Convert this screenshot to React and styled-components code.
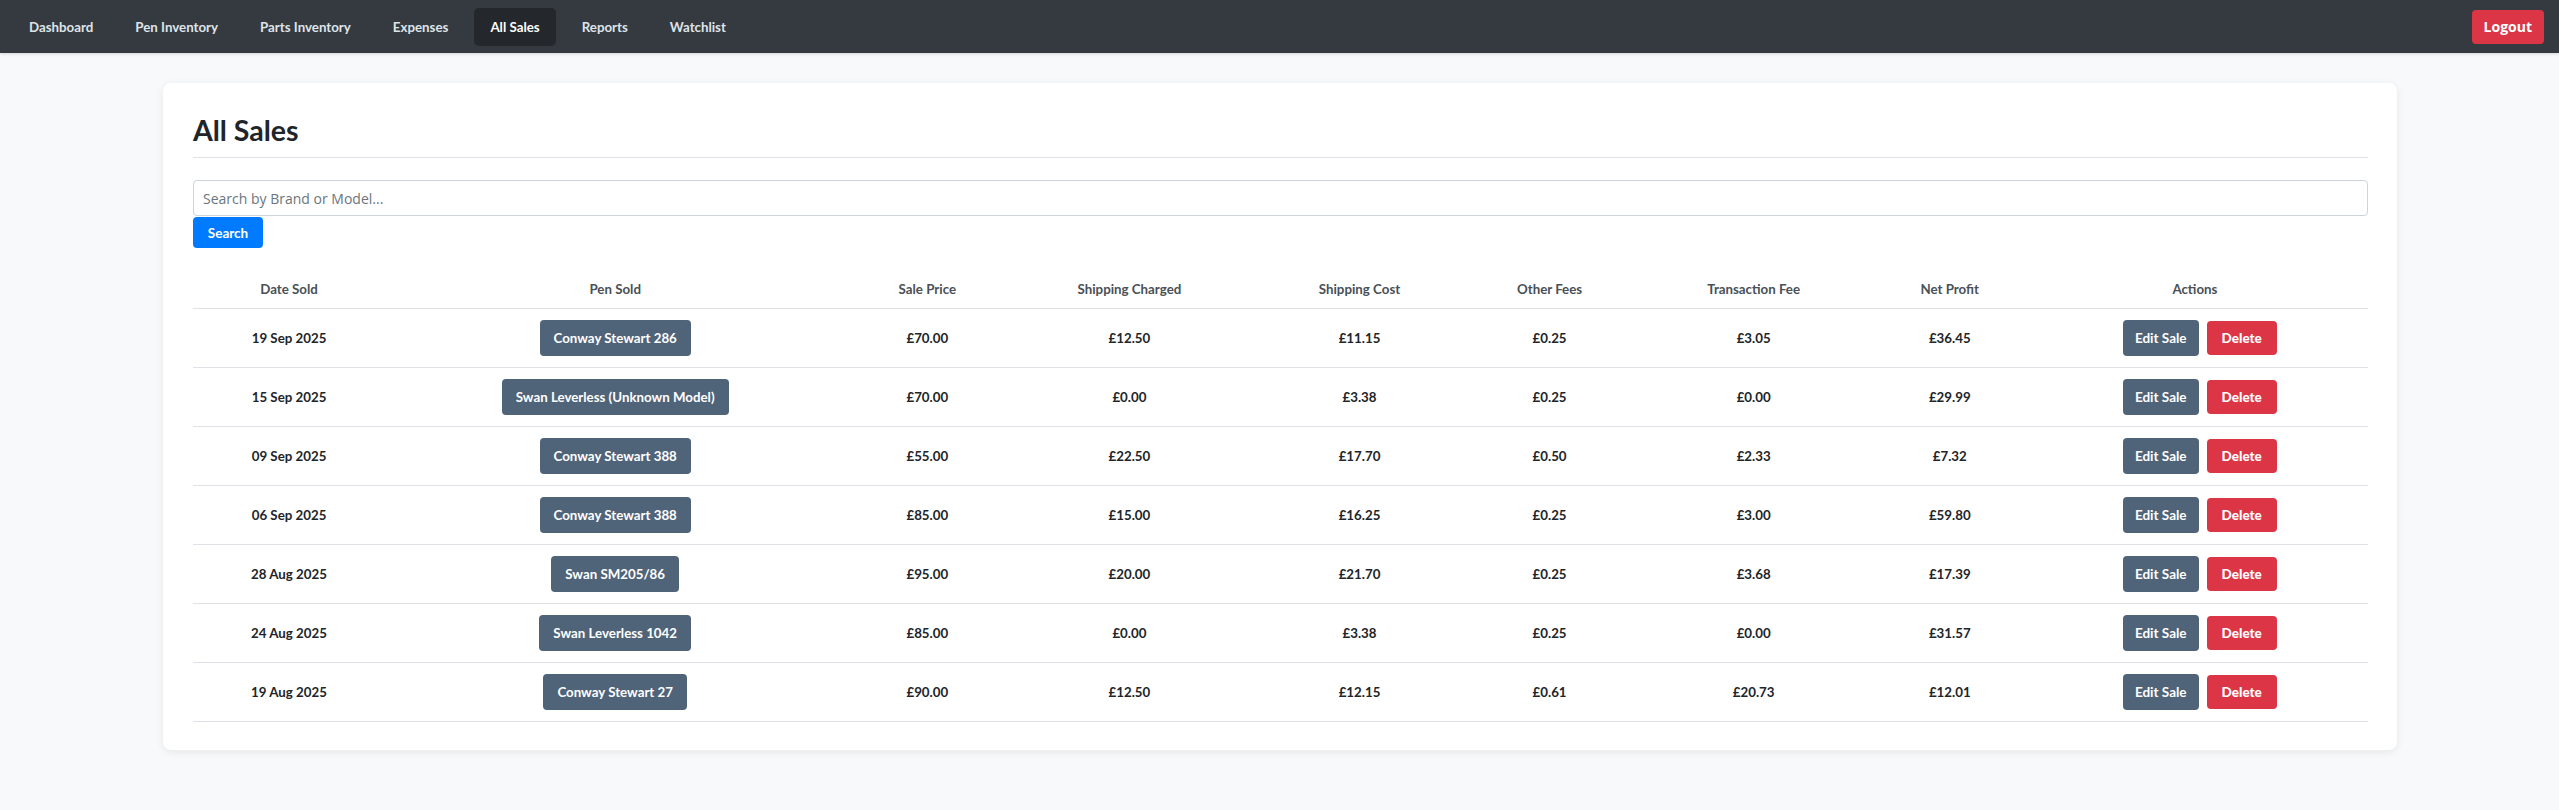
import React from 'react';
import styled, { createGlobalStyle } from 'styled-components';

const GlobalStyle = createGlobalStyle`
  body {
    margin: 0;
    background: #f8f9fa;
    font-family: Lato, "Liberation Sans", sans-serif;
    color: #212529;
  }
`;

const NavBar = styled.nav`
  height: 53px;
  background: #343a40;
  display: flex;
  align-items: center;
  justify-content: space-between;
  padding: 0 15px 0 13px;
  box-sizing: border-box;
  box-shadow: 0 1px 3px rgba(0, 0, 0, 0.15);
`;

const NavLinks = styled.div`
  display: flex;
  gap: 10px;
`;

const NavLink = styled.a`
  display: block;
  padding: 10px 16px;
  border-radius: 5px;
  font-size: 13.3px;
  font-weight: 700;
  line-height: 18px;
  color: ${(p) => (p.$active ? '#ffffff' : '#dfe4ea')};
  background: ${(p) => (p.$active ? '#24272b' : 'transparent')};
  text-decoration: none;
  cursor: pointer;
`;

const LogoutButton = styled.button`
  background: #dc3545;
  color: #fff;
  border: none;
  border-radius: 4px;
  height: 34px;
  padding: 0 12px;
  font-family: "Open Sans", "Noto Sans", sans-serif;
  font-weight: 700;
  font-size: 14px;
  cursor: pointer;
`;

const Card = styled.section`
  margin: 30px 162px 40px 163px;
  background: #fff;
  border-radius: 8px;
  box-shadow: 0 2px 8px rgba(0, 0, 0, 0.08);
  padding: 30px 29px 28px 30px;
`;

const Heading = styled.h2`
  margin: 0;
  padding-bottom: 10px;
  border-bottom: 1px solid #dee2e6;
  font-size: 28.5px;
  font-weight: 700;
  line-height: 34px;
  color: #212529;
`;

const SearchForm = styled.form`
  margin-top: 22px;
  display: flex;
  flex-direction: column;
  align-items: flex-start;
`;

const SearchInput = styled.input`
  width: 100%;
  box-sizing: border-box;
  height: 36px;
  padding: 0 9px;
  border: 1px solid #ced4da;
  border-radius: 4px;
  font-family: "Open Sans", "Noto Sans", sans-serif;
  font-size: 14px;
  color: #495057;
  &::placeholder {
    color: #6c757d;
  }
`;

const SearchButton = styled.button`
  width: 70px;
  height: 31px;
  margin-top: 1px;
  background: #007bff;
  color: #fff;
  border: none;
  border-radius: 4px;
  font-family: Lato, sans-serif;
  font-weight: 700;
  font-size: 13.5px;
  cursor: pointer;
`;

const Table = styled.table`
  margin-top: 18px;
  width: 100%;
  border-collapse: collapse;
  table-layout: fixed;
`;

const HeadCell = styled.th`
  padding: 15px 8px 10px;
  font-size: 13.3px;
  font-weight: 700;
  color: #495057;
  text-align: center;
  line-height: 17px;
  border-bottom: 1px solid #dee2e6;
`;

const Row = styled.tr`
  border-bottom: 1px solid #dee2e6;
`;

const Cell = styled.td`
  padding: 11px 8px;
  height: 36px;
  text-align: center;
  vertical-align: middle;
  font-size: 13.3px;
  font-weight: 700;
  color: #212529;
`;

const PenBadge = styled.span`
  display: inline-block;
  background: #4f6479;
  color: #fff;
  border-radius: 4px;
  padding: 9px 14px;
  font-size: 13.3px;
  font-weight: 700;
  line-height: 18px;
`;

const Actions = styled.div`
  display: flex;
  justify-content: center;
  align-items: center;
  gap: 8px;
  padding-left: 10px;
`;

const ActionButton = styled.button`
  border: none;
  border-radius: 4px;
  color: #fff;
  background: ${(p) => (p.$danger ? '#dc3545' : '#4f6479')};
  height: ${(p) => (p.$danger ? '34px' : '36px')};
  padding: 0 ${(p) => (p.$danger ? '15px' : '12px')};
  font-family: Lato, sans-serif;
  font-weight: ${(p) => (p.$danger ? 900 : 700)};
  font-size: 13.5px;
  cursor: pointer;
`;

const links = ['Dashboard', 'Pen Inventory', 'Parts Inventory', 'Expenses', 'All Sales', 'Reports', 'Watchlist'];

const columns = [
  ['Date Sold', 192],
  ['Pen Sold', 460],
  ['Sale Price', 164],
  ['Shipping Charged', 240],
  ['Shipping Cost', 220],
  ['Other Fees', 160],
  ['Transaction Fee', 248],
  ['Net Profit', 144],
  ['Actions', 346],
];

const sales = [
  ['19 Sep 2025', 'Conway Stewart 286', '£70.00', '£12.50', '£11.15', '£0.25', '£3.05', '£36.45'],
  ['15 Sep 2025', 'Swan Leverless (Unknown Model)', '£70.00', '£0.00', '£3.38', '£0.25', '£0.00', '£29.99'],
  ['09 Sep 2025', 'Conway Stewart 388', '£55.00', '£22.50', '£17.70', '£0.50', '£2.33', '£7.32'],
  ['06 Sep 2025', 'Conway Stewart 388', '£85.00', '£15.00', '£16.25', '£0.25', '£3.00', '£59.80'],
  ['28 Aug 2025', 'Swan SM205/86', '£95.00', '£20.00', '£21.70', '£0.25', '£3.68', '£17.39'],
  ['24 Aug 2025', 'Swan Leverless 1042', '£85.00', '£0.00', '£3.38', '£0.25', '£0.00', '£31.57'],
  ['19 Aug 2025', 'Conway Stewart 27', '£90.00', '£12.50', '£12.15', '£0.61', '£20.73', '£12.01'],
];

export default function App() {
  return (
    <>
      <GlobalStyle />
      <NavBar>
        <NavLinks>
          {links.map((l) => (
            <NavLink key={l} $active={l === 'All Sales'}>
              {l}
            </NavLink>
          ))}
        </NavLinks>
        <LogoutButton>Logout</LogoutButton>
      </NavBar>

      <Card>
        <Heading>All Sales</Heading>
        <SearchForm onSubmit={(e) => e.preventDefault()}>
          <SearchInput placeholder="Search by Brand or Model..." />
          <SearchButton type="submit">Search</SearchButton>
        </SearchForm>

        <Table>
          <colgroup>
            {columns.map(([name, w]) => (
              <col key={name} style={{ width: w }} />
            ))}
          </colgroup>
          <thead>
            <tr>
              {columns.map(([name]) => (
                <HeadCell key={name}>{name}</HeadCell>
              ))}
            </tr>
          </thead>
          <tbody>
            {sales.map((s, i) => (
              <Row key={i}>
                <Cell>{s[0]}</Cell>
                <Cell>
                  <PenBadge>{s[1]}</PenBadge>
                </Cell>
                {s.slice(2).map((v, j) => (
                  <Cell key={j}>{v}</Cell>
                ))}
                <Cell>
                  <Actions>
                    <ActionButton>Edit Sale</ActionButton>
                    <ActionButton $danger>Delete</ActionButton>
                  </Actions>
                </Cell>
              </Row>
            ))}
          </tbody>
        </Table>
      </Card>
    </>
  );
}
